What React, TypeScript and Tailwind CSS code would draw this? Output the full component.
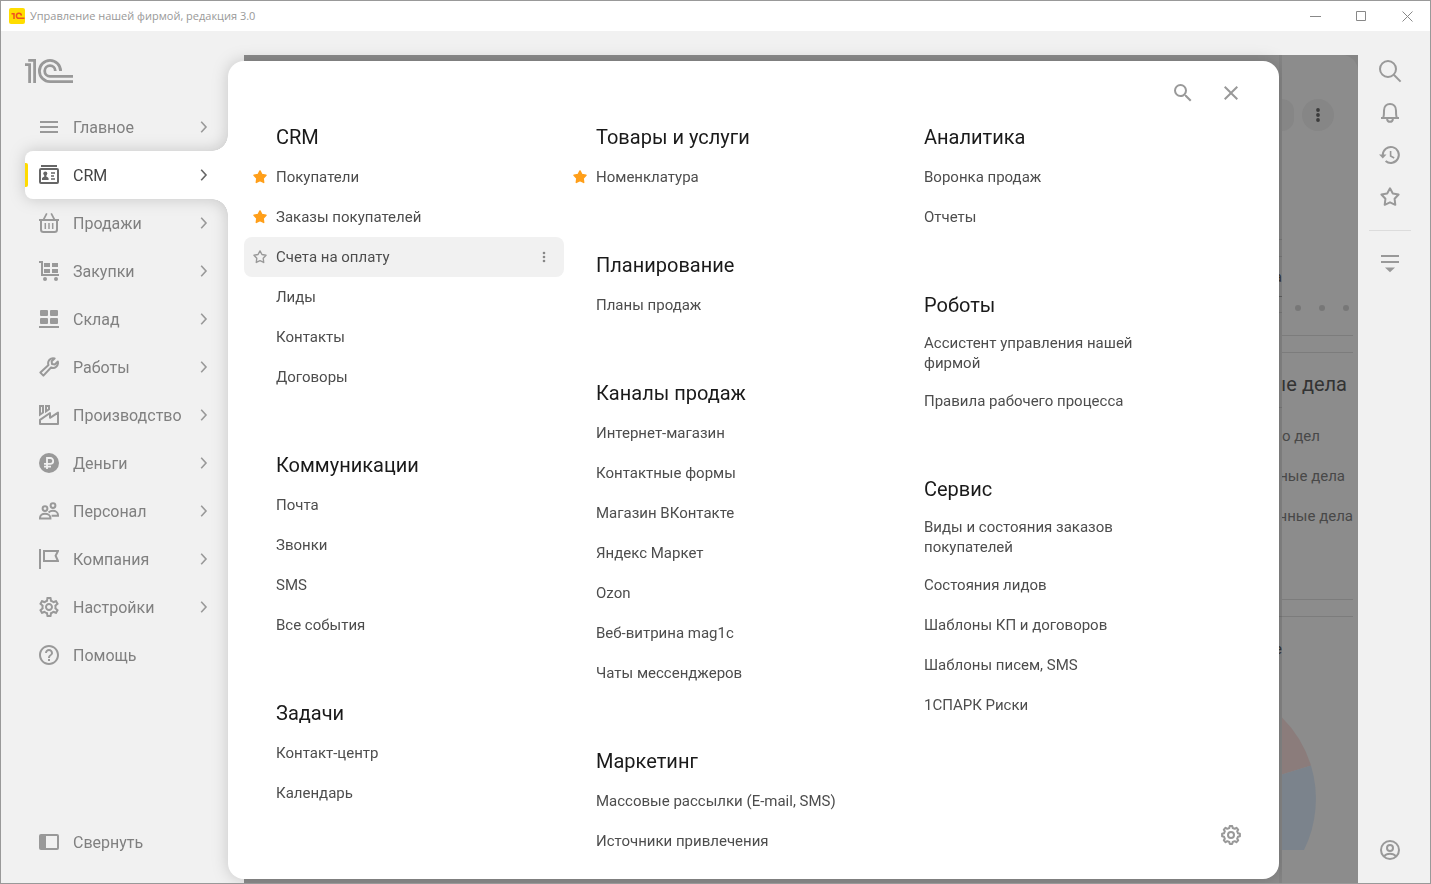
import { useState, type ReactNode } from 'react'
import { MdClose, MdHelpOutline, MdOutlineSettings, MdSearch } from 'react-icons/md'
import clsx from 'clsx'

const SECTION_COLUMNS: { title: string; items: { label: string; star?: boolean; hover?: boolean }[] }[][] = [
  [
    {
      title: 'CRM',
      items: [
        { label: 'Покупатели', star: true },
        { label: 'Заказы покупателей', star: true },
        { label: 'Счета на оплату', hover: true },
        { label: 'Лиды' },
        { label: 'Контакты' },
        { label: 'Договоры' },
      ],
    },
    {
      title: 'Коммуникации',
      items: [{ label: 'Почта' }, { label: 'Звонки' }, { label: 'SMS' }, { label: 'Все события' }],
    },
    {
      title: 'Задачи',
      items: [{ label: 'Контакт-центр' }, { label: 'Календарь' }],
    },
  ],
  [
    { title: 'Товары и услуги', items: [{ label: 'Номенклатура', star: true }] },
    { title: 'Планирование', items: [{ label: 'Планы продаж' }] },
    {
      title: 'Каналы продаж',
      items: [
        { label: 'Интернет-магазин' },
        { label: 'Контактные формы' },
        { label: 'Магазин ВКонтакте' },
        { label: 'Яндекс Маркет' },
        { label: 'Ozon' },
        { label: 'Веб-витрина mag1c' },
        { label: 'Чаты мессенджеров' },
      ],
    },
    {
      title: 'Маркетинг',
      items: [{ label: 'Массовые рассылки (E-mail, SMS)' }, { label: 'Источники привлечения' }],
    },
  ],
  [
    { title: 'Аналитика', items: [{ label: 'Воронка продаж' }, { label: 'Отчеты' }] },
    {
      title: 'Роботы',
      items: [{ label: 'Ассистент управления нашей фирмой' }, { label: 'Правила рабочего процесса' }],
    },
    {
      title: 'Сервис',
      items: [
        { label: 'Виды и состояния заказов покупателей' },
        { label: 'Состояния лидов' },
        { label: 'Шаблоны КП и договоров' },
        { label: 'Шаблоны писем, SMS' },
        { label: '1СПАРК Риски' },
      ],
    },
  ],
]

function Icon({ size = 20, className, children }: { size?: number; className?: string; children: ReactNode }) {
  return (
    <svg
      width={size}
      height={size}
      viewBox={`0 0 ${size} ${size}`}
      fill="none"
      stroke="currentColor"
      strokeWidth="2"
      className={clsx('shrink-0', className)}
      aria-hidden="true"
    >
      {children}
    </svg>
  )
}

function StarShape({ filled }: { filled?: boolean }) {
  return (
    <path
      d="M10 1.3 12.8 6.4 18.6 7.5 14.6 11.8 15.3 17.8 10 15.3 4.7 17.8 5.4 11.8 1.4 7.5 7.2 6.4z"
      fill={filled ? 'currentColor' : 'none'}
      strokeLinejoin="round"
    />
  )
}

// centre line of a cog with `teeth` teeth, first tooth at the top
function cogPath(teeth: number, c: number, outer: number, inner: number) {
  const step = (Math.PI * 2) / teeth
  const pts: string[] = []
  for (let i = 0; i < teeth; i++) {
    const a = i * step - Math.PI / 2
    const corners = [
      [inner, -0.3],
      [outer, -0.18],
      [outer, 0.18],
      [inner, 0.3],
    ]
    corners.forEach(([r, k]) => {
      pts.push(`${(c + r * Math.cos(a + k * step)).toFixed(2)} ${(c + r * Math.sin(a + k * step)).toFixed(2)}`)
    })
  }
  return `M${pts.join('L')}Z`
}

const NAV: { label: string; icon: ReactNode; leaf?: boolean }[] = [
  { label: 'Главное', icon: <Icon><path d="M1 5h18M1 10h18M1 15h18" /></Icon> },
  {
    label: 'CRM',
    icon: (
      <Icon>
        <path d="M2 1h16" />
        <rect x="1" y="4" width="18" height="14" rx="1" />
        <path d="M12 8h4M12 11h3M12 14h4" strokeWidth="1.5" />
        <g fill="currentColor" stroke="none">
          <circle cx="6.3" cy="8.6" r="2" />
          <path d="M3 15v-1.4c0-1 1-1.7 2.2-1.9V10h2.2v1.7c1.2.2 2.2.9 2.2 1.9V15z" />
        </g>
      </Icon>
    ),
  },
  {
    label: 'Продажи',
    icon: (
      <Icon>
        <path d="M0 7h20M2 7v9.5Q2 19 4.5 19h11q2.5 0 2.5-2.5V7" />
        <path d="M7.8.4 4.6 6.5M12.2.4l3.2 6.1" strokeWidth="1.7" />
        <path d="M6.3 10v6M10 10v6M13.7 10v6" strokeWidth="1.5" />
      </Icon>
    ),
  },
  {
    label: 'Закупки',
    icon: (
      <Icon>
        <path d="M0 1h3v13h17" />
        <g fill="currentColor" stroke="none">
          <path d="M5 2h6v4H5zM13 2h6v4h-6zM5 8h6v4H5zM13 8h6v4h-6z" />
          <circle cx="6" cy="18" r="2" />
          <circle cx="17" cy="18" r="2" />
        </g>
      </Icon>
    ),
  },
  {
    label: 'Склад',
    icon: (
      <Icon>
        <g fill="currentColor" stroke="none">
          <rect x="1" y="1" width="8" height="6" rx="1" />
          <rect x="11" y="1" width="8" height="6" rx="1" />
          <rect x="1" y="9" width="8" height="6" rx="1" />
          <rect x="11" y="9" width="8" height="6" rx="1" />
          <path d="M0 17h20v2H0z" />
        </g>
      </Icon>
    ),
  },
  {
    label: 'Работы',
    icon: (
      <Icon>
        <path
          d="M15.6 1.4A5 5 0 0 0 9.5 8L1.4 15.6 4.4 18.6 12 10.5A5 5 0 0 0 18.8 4.6L15.8 7.4 13 7 12.6 4.2z"
          strokeLinejoin="round"
        />
      </Icon>
    ),
  },
  {
    label: 'Производство',
    icon: (
      <Icon>
        <path d="M1 1h3v6.5L1 9.6zM7 1h3v3.2L7 6.3z" />
        <path d="M1 19v-4.2L11 8v4.8L19 7.6V19z" strokeLinejoin="round" />
      </Icon>
    ),
  },
  {
    label: 'Деньги',
    icon: (
      <Icon>
        <circle cx="10" cy="10" r="10" fill="currentColor" stroke="none" />
        <path d="M8 16V5h3.3a2.9 2.9 0 0 1 0 5.8H5M5 13.6h7" stroke="#f1f1f1" strokeWidth="1.8" />
      </Icon>
    ),
  },
  {
    label: 'Персонал',
    icon: (
      <Icon>
        <circle cx="6" cy="7.6" r="2.4" />
        <circle cx="14" cy="4.6" r="2.4" />
        <path d="M1 17.6v-.8c0-2.6 2.4-4 5-4s5.4 1.4 5.4 4v.8zM9.6 11.4c1-.9 2.6-1.6 4.2-1.6 2.8 0 5.2 1.6 5.2 4.2v.8h-6.4" />
      </Icon>
    ),
  },
  {
    label: 'Компания',
    icon: <Icon><path d="M1 0v20M5 2h14l-2.4 4.7L19 12H5z" /></Icon>,
  },
  { label: 'Настройки', icon: <MdOutlineSettings size={24} className="-m-0.5 shrink-0" /> },
  { label: 'Помощь', icon: <MdHelpOutline size={24} className="-m-0.5 shrink-0" />, leaf: true },
]

function TitleBar() {
  return (
    <header className="flex h-[30px] items-center bg-white pl-2">
      <svg width="16" height="16" viewBox="0 0 16 16" aria-hidden="true">
        <rect width="16" height="16" rx="2" fill="#ffdd00" />
        <path
          d="M2.5 5.8H5V11M12.4 7.6A2.5 2.5 0 1 0 10 10.300H15.500"
          fill="none"
          stroke="#f0501e"
          strokeWidth="1.500"
        />
      </svg>
      <h1 className="ml-[5px] font-['Open_Sans',sans-serif] text-[11px] text-[#999]">Управление нашей фирмой, редакция 3.0</h1>
      <div className="ml-auto flex h-full text-[#888]">
        <button aria-label="Свернуть окно" className="flex w-[46px] items-center justify-center">
          <svg width="11" height="11" stroke="currentColor" aria-hidden="true"><path d="M0 5.5h11" /></svg>
        </button>
        <button aria-label="Развернуть окно" className="flex w-[46px] items-center justify-center">
          <svg width="11" height="11" fill="none" stroke="currentColor" aria-hidden="true"><path d="M.5.5h9v9h-9z" /></svg>
        </button>
        <button aria-label="Закрыть окно" className="flex w-[46px] items-center justify-center">
          <svg width="11" height="11" stroke="currentColor" aria-hidden="true"><path d="M.5.5l10 10M10.5.5l-10 10" /></svg>
        </button>
      </div>
    </header>
  )
}

function Sidebar({ active, onSelect }: { active: number; onSelect: (i: number) => void }) {
  return (
    <aside className="relative z-20 flex w-[243px] shrink-0 flex-col pt-7 pr-4 pb-[17px] pl-6 text-[#999]">
      <svg width="48" height="24" viewBox="0 0 48 24" fill="none" stroke="currentColor" strokeWidth="2.8" aria-label="1С">
        <path d="M0 5.6h4.6V24M9.6 24V1.4H3.2" />
        <path d="M35.6 12A10.6 10.6 0 1 0 25 22.6H48M30.3 12A5.3 5.3 0 1 0 25 17.3H48" />
      </svg>
      <nav className="mt-5 flex flex-1 flex-col">
        {NAV.map((item, i) => (
          <button
            key={item.label}
            onClick={() => onSelect(i)}
            className={clsx(
              'relative flex h-12 items-center gap-3.5 pr-4 pl-3.5 text-left',
              i === active && 'text-[#666]'
            )}
          >
            {i === active && <span className="absolute left-0 h-6 w-[3px] rounded-r-xs bg-[#ffdb00]" />}
            {item.icon}
            <span className={clsx('flex-1 pt-0.5 text-base', i === active ? 'text-[#444]' : 'text-[#808080]')}>
              {item.label}
            </span>
            {!item.leaf && (
              <Icon size={16}>
                <path d="M5.2 2.800 10 8 5.200 13.200" strokeWidth="1.600" />
              </Icon>
            )}
          </button>
        ))}
        <button className="mt-auto flex h-12 items-center gap-3.5 pl-3.5 text-left">
          <Icon>
            <rect x="1" y="3" width="18" height="14" rx="1" />
            <path d="M1 3h6v14H1z" fill="currentColor" stroke="none" />
          </Icon>
          <span className="pt-0.5 text-base text-[#808080]">Свернуть</span>
        </button>
      </nav>
    </aside>
  )
}

// Dimmed home page, only its right edge shows beside the open menu
function Desktop() {
  return (
    <main className="mt-6 flex min-w-0 flex-1 justify-end overflow-hidden bg-[#858585]">
      <div className="flex flex-1 justify-end overflow-hidden rounded-tr-2xl bg-[#8c8c8c]">
        <div className="flex w-[3px] flex-col overflow-hidden bg-[#858585] text-[15px] leading-5 text-[#333]">
          <div className="mt-[184px] h-[18px] border-y border-[#777]" />
          <div className="flex h-10 items-center justify-end border-b border-[#5f5f5f]">а</div>
          <div className="h-4 border-b border-[#777]" />
          <div className="h-[95px] border-b border-[#777]" />
          <div className="h-[209px] border-b border-[#777]" />
          <div className="mt-[22px] flex justify-end">е</div>
        </div>
        <div className="flex w-[76px] flex-col text-[15px] leading-5 text-[#484848]">
          <div className="mt-11 flex justify-between pr-6">
            <span className="h-8 w-3 rounded-r-full bg-[#868686]" />
            <button aria-label="Ещё" className="flex size-8 items-center justify-center rounded-full bg-[#868686] text-[#3c3c3c]">
              <svg width="4" height="14" fill="currentColor" aria-hidden="true">
                <circle cx="2" cy="2" r="1.9" />
                <circle cx="2" cy="7" r="1.9" />
                <circle cx="2" cy="12" r="1.9" />
              </svg>
            </button>
          </div>
          <div className="mt-[174px] flex justify-end gap-[18px] pr-[9px]">
            <span className="size-1.5 rounded-full bg-[#777]" />
            <span className="size-1.5 rounded-full bg-[#777]" />
            <span className="size-1.5 rounded-full bg-[#777]" />
          </div>
          <div className="mr-[5px] mt-6 h-[18px] border-y border-[#7c7c7c]" />
          <div className="mr-[5px] flex h-[247px] flex-col overflow-hidden border-b border-[#7c7c7c] pt-[17px] whitespace-nowrap">
            <h2 className="flex h-7 items-center justify-end pr-1.5 text-xl text-[#333]">ые дела</h2>
            <p className="mt-[18px] h-10 py-2.5">о дел</p>
            <p className="flex h-10 items-center justify-end pr-2">ные дела</p>
            <p className="flex h-10 items-center justify-end">чные дела</p>
          </div>
          <div className="mr-[5px] h-[17px] border-b border-[#7c7c7c]" />
          <svg width="76" height="145" viewBox="1282 705 76 145" className="mt-[88px]" aria-hidden="true">
            <path d="M1282 717.5A116 116 0 0 1 1311 765.5L1282 774.5z" fill="#8b7c7b" />
            <path d="M1311 765.5A116 116 0 0 1 1304 850H1282V774.5z" fill="#7b838c" />
          </svg>
        </div>
      </div>
    </main>
  )
}

function ToolButton({ label, children }: { label: string; children: ReactNode }) {
  return (
    <button aria-label={label} className="flex h-[42px] w-full items-center justify-center">
      <Icon size={24}>{children}</Icon>
    </button>
  )
}

function ToolRail() {
  return (
    <aside className="flex w-[72px] shrink-0 flex-col items-center pt-[19px] pr-2 pb-3 text-[#999]">
      <ToolButton label="Поиск">
        <circle cx="10" cy="10" r="8" />
        <path d="M15.8 15.8l6.8 6.8" />
      </ToolButton>
      <ToolButton label="Уведомления">
        <path d="M3 17h18M5 17c1-1.2 1-3 1-7.5C6 5.5 8.500 3 12 3s6 2.500 6 6.500c0 4.500 0 6.300 1 7.500" />
        <path d="M9 18c.3 1.800 1.400 2.800 3 2.800s2.700-1 3-2.800" />
      </ToolButton>
      <ToolButton label="История">
        <path d="M4.800 12A8 8 0 1 1 7.600 18" />
        <path d="M12.600 8v5l3.600 2" strokeWidth="1.600" />
        <path d="M1 11.500h7.500L4.800 15.500z" fill="currentColor" stroke="none" />
      </ToolButton>
      <ToolButton label="Избранное">
        <g transform="translate(2 2)"><StarShape /></g>
      </ToolButton>
      <hr className="mt-3 w-[42px] border-[#dcdcdc]" />
      <div className="mt-3 w-full">
        <ToolButton label="Сервис и настройки">
          <path d="M3 4h18M3 10h18" />
          <path d="M7 15.500h10L12 20.200z" fill="currentColor" stroke="none" />
        </ToolButton>
      </div>
      <div className="mt-auto w-full">
        <ToolButton label="Пользователь">
          <circle cx="12" cy="12" r="9" />
          <circle cx="12" cy="10" r="3" />
          <path d="M6 18.500c1.500-2 3.600-2.700 6-2.700s4.500.7 6 2.700" />
        </ToolButton>
      </div>
    </aside>
  )
}

function SectionMenu({ active }: { active: number }) {
  return (
    <div className="absolute inset-y-0 right-[148px] left-0 z-10 overflow-hidden pt-[30px] pr-[3px] pb-1 pl-[227px]">
      <div className="relative h-full">
        {/* Sheet and the tab that joins it to the sidebar cast one shadow */}
        <div className="absolute inset-0 drop-shadow-[0_0_8px_rgba(0,0,0,0.18)]">
          <div className="h-full rounded-2xl bg-white" />
          <div className="absolute -left-[203px] flex h-20 w-[220px] flex-col" style={{ top: 26 + active * 48 }}>
            <div className="mr-[17px] ml-auto size-4 bg-[radial-gradient(circle_at_0_0,transparent_15.5px,white_16px)]" />
            <div className="h-12 rounded-l-lg bg-white" />
            <div className="mr-[17px] ml-auto size-4 bg-[radial-gradient(circle_at_0_100%,transparent_15.5px,white_16px)]" />
          </div>
        </div>

        <div className="relative flex h-full flex-col px-4">
          <div className="flex h-14 justify-end pt-2 pr-2 text-[#999]">
            <button aria-label="Поиск" className="flex size-12 items-center justify-center"><MdSearch size={24} /></button>
            <button aria-label="Закрыть" className="flex size-12 items-center justify-center"><MdClose size={24} /></button>
          </div>
          <div className="grid grid-cols-[320fr_328fr_371fr]">
            {SECTION_COLUMNS.map((sections, col) => (
              <div key={col} className="flex flex-col gap-12">
                {sections.map((section) => (
                  <section key={section.title}>
                    <h2 className="flex h-10 items-center pl-8 text-xl text-[#1a1a1a]">{section.title}</h2>
                    <ul className="max-w-80">
                      {section.items.map((item) => (
                        <li
                          key={item.label}
                          className={clsx('flex min-h-10 items-center gap-2 rounded-lg px-2', item.hover && 'bg-[#f1f1f1]')}
                        >
                          <span className={clsx('flex w-4 shrink-0 justify-center', item.star ? 'text-[#ff9f1a]' : 'text-[#999]')}>
                            {(item.star || item.hover) && (
                              <svg width="14" height="14" viewBox="0 0 20 20" stroke="currentColor" strokeWidth="2" aria-hidden="true">
                                <StarShape filled={item.star} />
                              </svg>
                            )}
                          </span>
                          <a href="#" className="flex-1 py-2 text-[15px] leading-5 text-[#4d4d4d]">{item.label}</a>
                          <span className="flex w-6 shrink-0 justify-center">
                            {item.hover && (
                              <button aria-label="Действия" className="text-[#888]">
                                <svg width="4" height="12" fill="currentColor" aria-hidden="true">
                                  <circle cx="2" cy="2" r="1.3" />
                                  <circle cx="2" cy="6" r="1.3" />
                                  <circle cx="2" cy="10" r="1.3" />
                                </svg>
                              </button>
                            )}
                          </span>
                        </li>
                      ))}
                    </ul>
                  </section>
                ))}
              </div>
            ))}
          </div>
          <button aria-label="Настройка меню" className="absolute right-6 bottom-5 flex size-12 items-center justify-center text-[#999]">
            <Icon>
              <path d={cogPath(8, 10, 9, 7.2)} strokeLinejoin="round" />
              <circle cx="10" cy="10" r="3" />
            </Icon>
          </button>
        </div>
      </div>
    </div>
  )
}

export default function App() {
  const [active, setActive] = useState(1)

  return (
    <div className="flex min-h-screen flex-col border border-[#999] bg-[#f1f1f1] font-[Roboto,sans-serif]">
      <TitleBar />
      <div className="relative flex flex-1">
        <Sidebar active={active} onSelect={setActive} />
        <Desktop />
        <SectionMenu active={active} />
        <ToolRail />
      </div>
    </div>
  )
}
